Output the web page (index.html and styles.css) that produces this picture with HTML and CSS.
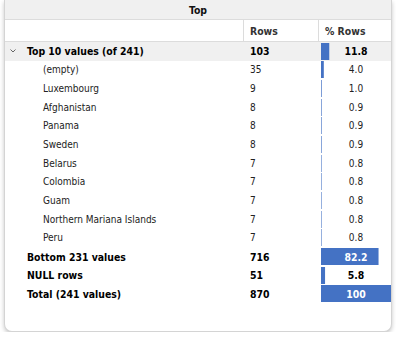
FILE: index.html
```html
<!DOCTYPE html>
<html>
<head>
<meta charset="utf-8">
<link rel="stylesheet" href="styles.css">
</head>
<body>
<div class="card">
  <div class="title">Top</div>
  <div class="row head">
    <div class="c1"></div>
    <div class="c2">Rows</div>
    <div class="c3">% Rows</div>
  </div>
  <div class="row bold group">
    <div class="c1"><svg class="chev" width="6" height="4" viewBox="0 0 6 4"><path d="M0.5 0.5 L3 3 L5.5 0.5" fill="none" stroke="#666" stroke-width="1"/></svg><span>Top 10 values (of 241)</span></div>
    <div class="c2">103</div>
    <div class="c3 pct"><div class="bar" style="--p:0.118"></div><span>11.8</span></div>
  </div>
  <div class="row sub"><div class="c1">(empty)</div><div class="c2">35</div><div class="c3 pct"><div class="bar" style="--p:0.040"></div><span>4.0</span></div></div>
  <div class="row sub"><div class="c1">Luxembourg</div><div class="c2">9</div><div class="c3 pct"><div class="bar" style="--p:0.010"></div><span>1.0</span></div></div>
  <div class="row sub"><div class="c1">Afghanistan</div><div class="c2">8</div><div class="c3 pct"><div class="bar" style="--p:0.009"></div><span>0.9</span></div></div>
  <div class="row sub"><div class="c1">Panama</div><div class="c2">8</div><div class="c3 pct"><div class="bar" style="--p:0.009"></div><span>0.9</span></div></div>
  <div class="row sub"><div class="c1">Sweden</div><div class="c2">8</div><div class="c3 pct"><div class="bar" style="--p:0.009"></div><span>0.9</span></div></div>
  <div class="row sub"><div class="c1">Belarus</div><div class="c2">7</div><div class="c3 pct"><div class="bar" style="--p:0.008"></div><span>0.8</span></div></div>
  <div class="row sub"><div class="c1">Colombia</div><div class="c2">7</div><div class="c3 pct"><div class="bar" style="--p:0.008"></div><span>0.8</span></div></div>
  <div class="row sub"><div class="c1">Guam</div><div class="c2">7</div><div class="c3 pct"><div class="bar" style="--p:0.008"></div><span>0.8</span></div></div>
  <div class="row sub"><div class="c1">Northern Mariana Islands</div><div class="c2">7</div><div class="c3 pct"><div class="bar" style="--p:0.008"></div><span>0.8</span></div></div>
  <div class="row sub"><div class="c1">Peru</div><div class="c2">7</div><div class="c3 pct"><div class="bar" style="--p:0.008"></div><span>0.8</span></div></div>
  <div class="row bold"><div class="c1">Bottom 231 values</div><div class="c2">716</div><div class="c3 pct"><div class="bar" style="--p:0.822"></div><span class="on">82.2</span></div></div>
  <div class="row bold"><div class="c1">NULL rows</div><div class="c2">51</div><div class="c3 pct"><div class="bar" style="--p:0.058"></div><span>5.8</span></div></div>
  <div class="row bold"><div class="c1">Total (241 values)</div><div class="c2">870</div><div class="c3 pct"><div class="bar" style="--p:1"></div><span class="on">100</span></div></div>
</div>
</body>
</html>
```
FILE: styles.css
```css
html, body {
  margin: 0;
  padding: 0;
  background: #ffffff;
}
body {
  padding: 0 4px;
  font-family: "DejaVu Sans Condensed", "DejaVu Sans", sans-serif;
  font-stretch: condensed;
  font-size: 10px;
  color: #222;
}
.card {
  height: 332px;
  box-sizing: border-box;
  border: 1px solid #d4d4d4;
  border-top: none;
  border-radius: 0 0 8px 8px;
  box-shadow: 0 2px 4px rgba(0, 0, 0, 0.22);
  background: #fff;
  overflow: hidden;
}
.title {
  height: 19px;
  background: #f0f0f0;
  border-bottom: 1px solid #dcdcdc;
  display: flex;
  align-items: center;
  justify-content: center;
  font-weight: bold;
  font-size: 10.4px;
  color: #111;
}
.row {
  display: grid;
  grid-template-columns: 238px 75px 1fr;
  height: 18.67px;
  align-items: center;
}
.row > div {
  height: 100%;
  display: flex;
  align-items: center;
}
.head {
  height: 21px;
  border-bottom: 1px solid #dcdcdc;
  font-weight: bold;
  font-size: 10.4px;
  color: #333;
}
.head .c2, .head .c3 {
  border-left: 1px solid #dcdcdc;
}
.head .c2 { padding-left: 6px; }
.head .c3 { padding-left: 6px; }
.c1 { padding-left: 22px; }
.sub .c1 { padding-left: 38px; }
.c2 { padding-left: 7px; }
.group { background: #f0f0f0; }
.group .c1 { padding-left: 5px; }
.chev { margin-right: 11px; }
.bold { font-weight: bold; font-size: 10.4px; color: #000; }
.pct {
  display: grid !important;
  padding-left: 3px;
}
.pct > * {
  grid-area: 1 / 1;
}
.bar {
  justify-self: stretch;
  align-self: center;
  height: 17px;
  background: #4472c4;
  transform: scaleX(var(--p));
  transform-origin: left center;
}
.pct span {
  justify-self: center;
  align-self: center;
  position: relative;
}
.pct span.on { color: #fff; }
```
